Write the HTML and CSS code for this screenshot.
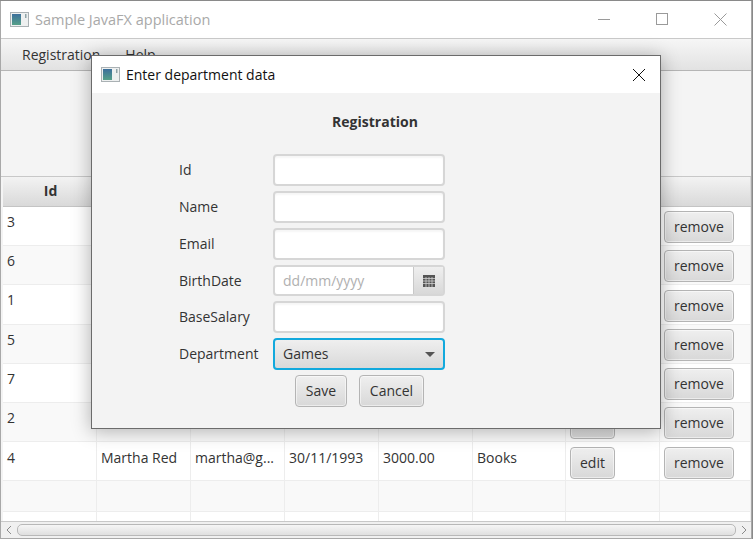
FILE: index.html
```html
<!DOCTYPE html>
<html lang="en">
<head>
<meta charset="utf-8">
<title>Sample JavaFX application</title>
<link rel="stylesheet" href="styles.css">
</head>
<body>
<div class="window">
  <header class="titlebar">
    <svg class="appicon" width="19" height="15" viewBox="0 0 19 15"><defs><linearGradient id="ig1" x1="0" y1="0" x2="0" y2="1"><stop offset="0" stop-color="#3c6f9c"/><stop offset="1" stop-color="#55a088"/></linearGradient></defs><rect x=".5" y=".5" width="18" height="14" fill="#eef0f0" stroke="#aab1b4"/><rect x="2" y="2" width="9" height="11" fill="url(#ig1)"/><rect x="15" y="2" width="1.5" height="4" fill="#8fa3a8"/></svg>
    <span class="title">Sample JavaFX application</span>
    <div class="winctrls">
      <svg width="13" height="13" viewBox="0 0 13 13"><path d="M0 6.5H12" stroke="#9a9a9a"/></svg>
      <svg width="13" height="13" viewBox="0 0 13 13"><rect x=".5" y=".5" width="11" height="11" fill="none" stroke="#9a9a9a"/></svg>
      <svg width="13" height="13" viewBox="0 0 13 13"><path d="M.5 .5L12.5 12.5M12.5 .5L.5 12.5" stroke="#9a9a9a"/></svg>
    </div>
  </header>
  <nav class="menubar"><span>Registration</span><span>Help</span></nav>
  <div class="toolarea"></div>
  <div class="table">
    <div class="thead">
      <div class="th">Id</div><div class="th"></div><div class="th"></div><div class="th"></div><div class="th"></div><div class="th"></div><div class="th"></div><div class="th"></div>
    </div>
    <div class="row"><div class="td">3</div><div class="td"></div><div class="td"></div><div class="td"></div><div class="td"></div><div class="td"></div><div class="td act"><button class="btn">edit</button></div><div class="td act"><button class="btn">remove</button></div></div>
    <div class="row alt"><div class="td">6</div><div class="td"></div><div class="td"></div><div class="td"></div><div class="td"></div><div class="td"></div><div class="td act"><button class="btn">edit</button></div><div class="td act"><button class="btn">remove</button></div></div>
    <div class="row tall"><div class="td">1</div><div class="td"></div><div class="td"></div><div class="td"></div><div class="td"></div><div class="td"></div><div class="td act"><button class="btn">edit</button></div><div class="td act"><button class="btn">remove</button></div></div>
    <div class="row alt"><div class="td">5</div><div class="td"></div><div class="td"></div><div class="td"></div><div class="td"></div><div class="td"></div><div class="td act"><button class="btn">edit</button></div><div class="td act"><button class="btn">remove</button></div></div>
    <div class="row"><div class="td">7</div><div class="td"></div><div class="td"></div><div class="td"></div><div class="td"></div><div class="td"></div><div class="td act"><button class="btn">edit</button></div><div class="td act"><button class="btn">remove</button></div></div>
    <div class="row alt"><div class="td">2</div><div class="td"></div><div class="td"></div><div class="td"></div><div class="td"></div><div class="td"></div><div class="td act"><button class="btn">edit</button></div><div class="td act"><button class="btn">remove</button></div></div>
    <div class="row low"><div class="td">4</div><div class="td">Martha Red</div><div class="td">martha@g...</div><div class="td">30/11/1993</div><div class="td">3000.00</div><div class="td">Books</div><div class="td act"><button class="btn">edit</button></div><div class="td act"><button class="btn">remove</button></div></div>
    <div class="row alt empty"><div class="td"></div><div class="td"></div><div class="td"></div><div class="td"></div><div class="td"></div><div class="td"></div><div class="td"></div><div class="td"></div></div>
    <div class="row rest"><div class="td"></div><div class="td"></div><div class="td"></div><div class="td"></div><div class="td"></div><div class="td"></div><div class="td"></div><div class="td"></div></div>
  </div>
  <div class="hscroll">
    <svg width="6" height="10" viewBox="0 0 6 10"><path d="M5 1L1 5L5 9" fill="none" stroke="#8a8a8a"/></svg>
    <div class="thumb"></div>
    <svg width="6" height="10" viewBox="0 0 6 10"><path d="M1 1L5 5L1 9" fill="none" stroke="#8a8a8a"/></svg>
  </div>
</div>

<section class="dialog">
  <header class="dlgbar">
    <svg class="appicon" width="19" height="15" viewBox="0 0 19 15"><defs><linearGradient id="ig2" x1="0" y1="0" x2="0" y2="1"><stop offset="0" stop-color="#3c6f9c"/><stop offset="1" stop-color="#55a088"/></linearGradient></defs><rect x=".5" y=".5" width="18" height="14" fill="#eef0f0" stroke="#aab1b4"/><rect x="2" y="2" width="9" height="11" fill="url(#ig2)"/><rect x="15" y="2" width="1.5" height="4" fill="#8fa3a8"/></svg>
    <span class="dlgtitle">Enter department data</span>
    <svg class="dlgclose" width="14" height="14" viewBox="0 0 14 14"><path d="M1 1L13 13M13 1L1 13" stroke="#111"/></svg>
  </header>
  <div class="dlgbody">
    <h1 class="heading">Registration</h1>
    <form class="form">
      <label>Id</label><div class="input"></div>
      <label>Name</label><div class="input"></div>
      <label>Email</label><div class="input"></div>
      <label>BirthDate</label>
      <div class="date">
        <div class="dateval">dd/mm/yyyy</div>
        <div class="datebtn"><svg width="12" height="12" viewBox="0 0 12 12"><rect width="12" height="12" fill="#555"/><path d="M0 3.5H12M0 6H12M0 8.5H12M3 2V12M6 2V12M9 2V12" stroke="#cfcfcf" stroke-width=".8"/></svg></div>
      </div>
      <label>BaseSalary</label><div class="input"></div>
      <label>Department</label>
      <div class="combo"><span class="comboval">Games</span><i class="caret"></i></div>
      <div class="actions"><button type="button" class="btn save">Save</button><button type="button" class="btn cancel">Cancel</button></div>
    </form>
  </div>
</section>
</body>
</html>
```
FILE: styles.css
```css
* { box-sizing: border-box; }
html, body { margin: 0; height: 100%; }
body {
  width: 753px; height: 539px; overflow: hidden; position: relative;
  background: #8a8a8a;
  font-family: "Open Sans", "Noto Sans", sans-serif;
  font-size: 14px; color: #333;
}
.window {
  width: 752px; height: 538px; margin-top: 1px;
  background: #f4f4f4;
  border: 1px solid #a8a8a8; border-top: 0;
  display: flex; flex-direction: column;
}
.titlebar {
  height: 38px; flex: none; background: #fff;
  display: flex; align-items: center; padding-left: 9px;
  border-bottom: 1px solid #c9c9c9;
}
.appicon { flex: none; }
.title { margin-left: 6px; font-size: 14.5px; color: #a9a9a9; }
.winctrls { margin-left: auto; display: flex; gap: 45px; padding-right: 24px; }
.menubar {
  height: 32px; flex: none;
  background: linear-gradient(#f6f6f6, #e2e2e2);
  border-bottom: 1px solid #b5b5b5;
  display: flex; gap: 25px; align-items: center; padding-left: 21px;
}
.toolarea { height: 106px; flex: none; background: #f4f4f4; border-bottom: 1px solid #c8c8c8; }
.table { flex: 1; min-height: 0; display: flex; flex-direction: column; padding-left: 2px; }
.thead, .row { display: grid; grid-template-columns: repeat(5, 94px) 93px 94px 1fr; flex: none; }
.thead { height: 30px; background: linear-gradient(#f3f3f3, #d9d9d9); border-bottom: 1px solid #c4c4c4; }
.th { font-weight: 700; text-align: center; line-height: 28px; border-right: 1px solid #d8d8d8; }
.th:first-child { padding-left: 2px; }
.row { height: 39px; background: #fff; border-bottom: 1px solid #ededed; }
.row.tall { height: 40px; }
.row.alt { background: #f9f9f9; }
.row.empty { height: 31px; }
.row.rest { flex: 1; height: auto; border-bottom: 0; }
.td { padding: 5px 4px 0; border-right: 1px solid #ededed; white-space: nowrap; overflow: hidden; line-height: 20px; }
.td.act { padding: 4px 0 0 4px; }
.row.tall .td.act { padding-top: 5px; }
.row.low .td { padding-top: 6px; }
.row.low .td.act { padding-top: 5px; }
.btn {
  height: 32px; padding: 0 9px;
  font: inherit; color: #333;
  border: 1px solid #b4b4b4; border-radius: 4px;
  background: linear-gradient(#efefef, #d8d8d8);
  box-shadow: inset 0 0 0 1px rgba(255,255,255,.5);
}
.hscroll {
  height: 17px; flex: none; background: #f0f0f0;
  border-top: 1px solid #c8c8c8;
  display: flex; align-items: center; gap: 5px; padding: 0 4px 0 5px;
}
.thumb {
  flex: 1; height: 12px;
  border: 1px solid #b8b8b8; border-radius: 5px;
  background: linear-gradient(#f6f6f6, #dfdfdf);
}
.dialog {
  position: absolute; left: 91px; top: 55px;
  width: 570px; height: 374px;
  background: #f3f3f3;
  border: 1px solid #6b6b6b;
  box-shadow: 0 2px 18px rgba(0,0,0,.3);
  display: flex; flex-direction: column;
}
.dlgbar { height: 37px; flex: none; background: #fff; display: flex; align-items: center; padding: 0 14px 0 9px; }
.dlgtitle { margin-left: 6px; color: #111; }
.dlgclose { margin-left: auto; }
.dlgbody { flex: 1; }
.heading { margin: 0; padding: 19px 2px 0 0; height: 61px; text-align: center; font-size: 14px; font-weight: 700; line-height: 20px; color: #333; }
.form {
  display: grid; grid-template-columns: 95px 172px;
  grid-template-rows: 32px 32px 32px 31px 32px 32px 32px;
  row-gap: 5px; align-items: center; padding-left: 86px;
}
.form label { line-height: 20px; padding-left: 1px; }
.input {
  height: 32px; background: #fff;
  border: 2px solid #d6d6d6; border-radius: 4px;
  box-shadow: inset 0 2px 2px rgba(0,0,0,.04);
}
.date { height: 31px; display: flex; border: 2px solid #d6d6d6; border-radius: 4px; background: #fff; }
.dateval { flex: 1; padding-left: 8px; line-height: 27px; color: #b0b0b0; }
.datebtn {
  width: 30px; display: flex; align-items: center; justify-content: center;
  background: linear-gradient(#efefef, #d8d8d8);
  border-left: 1px solid #c8c8c8;
}
.combo {
  height: 32px; display: flex; align-items: center; justify-content: space-between;
  padding: 0 8px;
  border: 2px solid #12a9dd; border-radius: 4px;
  background: linear-gradient(#efefef, #d9d9d9);
}
.comboval { padding-bottom: 2px; }
.caret { width: 0; height: 0; border: 5px solid transparent; border-top: 5px solid #555; border-bottom: 0; }
.actions { grid-column: 1 / -1; display: flex; gap: 12px; padding-left: 117px; }
.save { width: 52px; padding: 0 0 2px; }
.cancel { width: 65px; padding: 0 0 2px; }
```
